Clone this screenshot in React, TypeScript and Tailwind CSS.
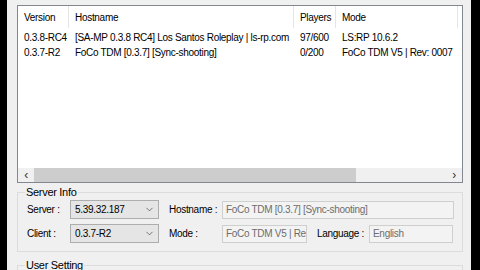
import { ChevronDown } from "lucide-react";

const columns = [
  { label: "Version", width: "w-[51px]" },
  { label: "Hostname", width: "w-[225px]" },
  { label: "Players", width: "w-[42px]" },
  { label: "Mode", width: "w-[122px]" },
];

const servers = [
  ["0.3.8-RC4", "[SA-MP 0.3.8 RC4] Los Santos Roleplay | ls-rp.com", "97/600", "LS:RP 10.6.2"],
  ["0.3.7-R2", "FoCo TDM [0.3.7] [Sync-shooting]", "0/200", "FoCo TDM V5 | Rev: 0007"],
];

function Combo({ value }: { value: string }) {
  return (
    <div className="flex h-[19px] w-[89px] shrink-0 items-center justify-between border border-[#adadad] bg-[#e5e5e5] pl-[4px] pr-[3px]">
      <span>{value}</span>
      <ChevronDown className="h-[11px] w-[11px] text-[#444]" strokeWidth={1.5} />
    </div>
  );
}

function Field({ value, className }: { value: string; className: string }) {
  return (
    <div
      className={`flex h-[18px] shrink-0 items-center overflow-hidden whitespace-nowrap border border-[#cfcfcf] bg-[#f3f3f3] px-[3px] text-[#6d6d6d] ${className}`}
    >
      {value}
    </div>
  );
}

export default function App() {
  return (
    <div className="flex h-[270px] w-[480px] overflow-hidden bg-black font-['Liberation_Sans',sans-serif] text-[10px] tracking-[-0.3px] text-black">
      <div className="ml-[7px] flex w-[464px] flex-col bg-[#f0f0f0] pl-[10px] pr-[8px]">
        {/* Server list */}
        <div className="mt-[5px] flex h-[178px] shrink-0 flex-col border border-[#828790] bg-white">
          <div className="flex h-[22px] shrink-0">
            {columns.map((c) => (
              <div key={c.label} className={`${c.width} flex items-center border-r border-[#e5e5e5] pl-[6px]`}>
                {c.label}
              </div>
            ))}
          </div>
          <div className="mt-[2px] flex-1">
            {servers.map((row) => (
              <div key={row[0]} className="flex h-[15px] items-center">
                {row.map((cell, i) => (
                  <div key={i} className={`${columns[i].width} overflow-hidden whitespace-nowrap pl-[6px]`}>
                    {cell}
                  </div>
                ))}
              </div>
            ))}
          </div>
          {/* Horizontal scrollbar */}
          <div className="flex h-[14px] shrink-0 items-center bg-[#f0f0f0]">
            <div className="flex w-[16px] items-center justify-center text-[12px] text-[#333]">‹</div>
            <div className="h-full w-[322px] bg-[#cdcdcd]" />
            <div className="flex-1" />
            <div className="flex w-[16px] items-center justify-center text-[12px] text-[#333]">›</div>
          </div>
        </div>

        {/* Server Info */}
        <div className="relative mt-[9px] h-[60px] shrink-0 border border-[#dcdcdc]">
          <span className="absolute left-[7px] top-[-7px] bg-[#f0f0f0] px-[1px] text-[11px] leading-[12px]">
            Server Info
          </span>
          <div className="flex flex-col gap-[5px] pl-[9px] pt-[7px]">
            <div className="flex items-center">
              <span className="w-[43px]">Server :</span>
              <Combo value="5.39.32.187" />
              <span className="ml-[10px] w-[53px]">Hostname :</span>
              <Field value="FoCo TDM [0.3.7] [Sync-shooting]" className="w-[232px]" />
            </div>
            <div className="flex items-center">
              <span className="w-[43px]">Client :</span>
              <Combo value="0.3.7-R2" />
              <span className="ml-[10px] w-[53px]">Mode :</span>
              <Field value="FoCo TDM V5 | Re" className="w-[85px]" />
              <span className="ml-[10px] w-[52px]">Language :</span>
              <Field value="English" className="w-[84px]" />
            </div>
          </div>
        </div>

        {/* User Setting */}
        <div className="relative mt-[13px] h-[40px] shrink-0 border border-[#dcdcdc]">
          <span className="absolute left-[7px] top-[-7px] bg-[#f0f0f0] px-[1px] text-[11px] leading-[12px]">
            User Setting
          </span>
        </div>
      </div>
    </div>
  );
}
